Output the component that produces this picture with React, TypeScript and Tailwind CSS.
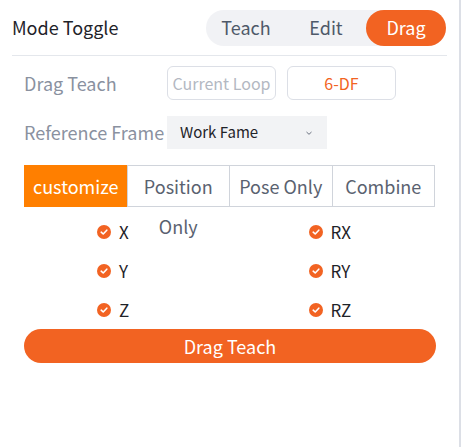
import { useState } from "react";

const modes = ["Teach", "Edit", "Drag"];
const tabs = ["customize", "Position Only", "Pose Only", "Combine"];
const axes = [
    ["X", "RX"],
    ["Y", "RY"],
    ["Z", "RZ"],
];

function CheckDot() {
    return (
        <svg width="14" height="14" viewBox="0 0 14 14" className="shrink-0">
            <circle cx="7" cy="7" r="7" fill="#f26322" />
            <path d="M4.2 7.2 L6.2 9 L9.8 5.2" fill="none" stroke="#fff" strokeWidth="1.6" strokeLinecap="round" strokeLinejoin="round" />
        </svg>
    );
}

export default function App() {
    const [mode, setMode] = useState("Drag");
    const [tab, setTab] = useState("customize");

    return (
        <div
            className="w-[461px] h-[447px] bg-white border-r-2 border-[#dcdfe6] px-3"
            style={{ fontFamily: '"Noto Sans CJK SC", "Noto Sans", sans-serif' }}
        >
            {/* Header */}
            <div className="flex items-center justify-between h-[56px] border-b border-[#e4e7ec]">
                <span className="text-[18px] text-[#1f2329]">Mode Toggle</span>
                <div className="flex h-[36px] w-[240px] rounded-full bg-[#f1f2f5] mr-[1px]">
                    {modes.map((m) => (
                        <button
                            key={m}
                            onClick={() => setMode(m)}
                            className={`flex-1 rounded-full text-[18px] ${
                                mode === m ? "bg-[#f26322] text-white" : "text-[#4e5969]"
                            }`}
                        >
                            {m}
                        </button>
                    ))}
                </div>
            </div>

            <div className="px-3">
                {/* Drag teach */}
                <div className="flex items-center mt-[10px] h-[34px]">
                    <span className="w-[143px] text-[18px] text-[#8a919f]">Drag Teach</span>
                    <div className="w-[109px] h-[34px] rounded-md border border-[#dcdfe6] flex items-center justify-center text-[16px] text-[#b3b8c2] whitespace-nowrap overflow-hidden">
                        Current Loop
                    </div>
                    <div className="ml-[11px] w-[109px] h-[34px] rounded-md border border-[#dcdfe6] flex items-center justify-center text-[16px] text-[#f26322]">
                        6-DF
                    </div>
                </div>

                {/* Reference frame */}
                <div className="flex items-center mt-[16px] h-[33px]">
                    <span className="w-[143px] text-[18px] text-[#8a919f] whitespace-nowrap">Reference Frame</span>
                    <div className="w-[160px] h-[33px] bg-[#f2f3f5] flex items-center justify-between pl-[13px] pr-[13px] text-[15px] text-[#1f2329]">
                        <span>Work Fame</span>
                        <svg width="10" height="10" viewBox="0 0 10 10">
                            <path d="M2.5 4 L5 6.3 L7.5 4" fill="none" stroke="#6b7280" strokeWidth="1" />
                        </svg>
                    </div>
                </div>
            </div>

            {/* Tabs */}
            <div className="flex mt-[16px] mx-3 h-[42px]">
                {tabs.map((t, i) => (
                    <button
                        key={t}
                        onClick={() => setTab(t)}
                        className={`flex-1 h-[42px] leading-[40px] px-[8px] text-[18px] border border-[#d0d4db] ${
                            i > 0 ? "-ml-px" : ""
                        } ${tab === t ? "bg-[#ff7f00] border-[#ff7f00] text-white" : "bg-white text-[#5a6270]"}`}
                    >
                        {t}
                    </button>
                ))}
            </div>

            {/* Axes */}
            <div className="mx-3 mt-[5px] grid grid-cols-2">
                {axes.map(([a, b]) => (
                    <div key={a} className="contents">
                        <div className="flex items-center gap-[8px] h-[39px] pl-[73px]">
                            <CheckDot />
                            <span className="text-[17px] text-[#1f2329]">{a}</span>
                        </div>
                        <div className="flex items-center gap-[8px] h-[39px] pl-[79px]">
                            <CheckDot />
                            <span className="text-[17px] text-[#1f2329]">{b}</span>
                        </div>
                    </div>
                ))}
            </div>

            <button className="mx-3 w-[412px] h-[34px] rounded-full bg-[#f26322] text-white text-[18px]">
                Drag Teach
            </button>
        </div>
    );
}
